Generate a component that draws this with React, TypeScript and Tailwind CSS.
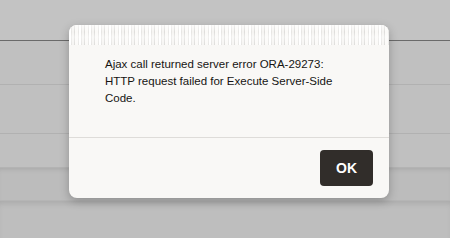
import type { ReactElement } from 'react'

export default function App(): ReactElement {
  return (
    <div className="relative h-[238px] w-[450px] overflow-hidden bg-[#c2c2c2] font-['Liberation_Sans',Arial,sans-serif]">
      {/* page behind the overlay */}
      <div className="flex flex-col">
        <div className="h-[40px] bg-[#c3c3c3]" />
        <div className="h-px bg-[#6a6a6a]" />
        <div className="h-[44px] border-b border-[#b1b1b1] bg-[#c0c0c0]" />
        <div className="h-[49px] border-b border-[#b1b1b1] bg-[#c0c0c0]" />
        <div className="h-[33px] bg-[#c0c0c0]" />
        <div className="h-[33px] border-t border-[#b3b3b3] bg-[#bcbcbc] shadow-[inset_0_4px_5px_-3px_rgba(0,0,0,0.12)]" />
        <div className="h-[40px] border-t border-[#b5b5b5] bg-[#bebebe] shadow-[inset_0_5px_6px_-3px_rgba(0,0,0,0.12)]" />
      </div>

      {/* dialog */}
      <div className="absolute left-[69px] top-[25px] flex w-[320px] flex-col overflow-hidden rounded-[8px] bg-[#f9f8f6] shadow-[0_3px_10px_rgba(0,0,0,0.25)]">
        <div className="h-[20px] bg-[linear-gradient(180deg,rgba(255,255,255,0.55)_0%,rgba(255,255,255,0)_35%,rgba(255,255,255,0.4)_60%,rgba(255,255,255,0)_100%),repeating-linear-gradient(90deg,#ffffff_0px,#ffffff_2px,#e6e5e3_2px,#e6e5e3_3px,#f6f5f3_3px,#f6f5f3_5px,#dedddb_5px,#dedddb_6px,#fbfaf8_6px,#fbfaf8_9px,#e8e7e5_9px,#e8e7e5_10px)]" />
        <div className="h-[92px] pl-[36px] pr-[38px] pt-[11px] text-[11.5px] leading-[17px] text-[#161513]">
          Ajax call returned server error ORA-29273: HTTP request failed for Execute Server-Side Code.
        </div>
        <div className="flex h-[61px] items-center justify-end border-t border-[#dedcd9] pr-[16px]">
          <button
            type="button"
            className="h-[36px] w-[53px] rounded-[4px] bg-[#312d2a] text-[14px] font-bold text-white"
          >
            OK
          </button>
        </div>
      </div>
    </div>
  )
}
